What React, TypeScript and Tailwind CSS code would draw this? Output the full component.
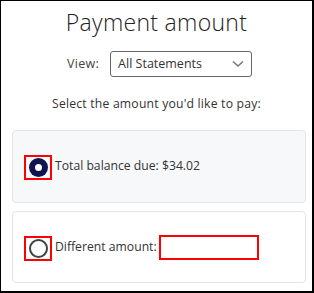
import React from "react";

export default function App() {
  const font = { fontFamily: '"Open Sans", "Liberation Sans", sans-serif' };
  return (
    <div
      className="w-[314px] h-[293px] box-border border-l border-t border-r-2 border-b-2 border-black bg-white text-[#333]"
      style={font}
    >
      <div className="flex flex-col items-center pt-[5px]">
        <h1 className="text-[23px] leading-[32px] font-light text-[#222] tracking-[0.3px]">Payment amount</h1>
      </div>
      <div className="flex items-center mt-[13px] ml-[66px] h-[26px]">
        <span className="text-[12.5px] text-[#444] tracking-[0.3px]">View:</span>
        <div className="ml-[11px] w-[142px] h-[26px] box-border border border-[#666] rounded-[3px] flex items-center justify-between pl-[7px] pr-[7px]">
          <span className="text-[12.5px] text-[#333]">All Statements</span>
          <svg width="12" height="8" viewBox="0 0 12 8">
            <path d="M1 1.5 L6 6 L11 1.5" fill="none" stroke="#777" strokeWidth="1.6" />
          </svg>
        </div>
      </div>
      <div className="flex justify-center mt-[18px]">
        <span className="text-[12.2px] leading-[18px] text-[#333] tracking-[0.2px]">Select the amount you'd like to pay:</span>
      </div>
      <div className="ml-[11px] mt-[17px] w-[294px] h-[73px] box-border border border-[#e3e5e8] rounded-[4px] bg-[#f7f8fa] flex items-center pl-[11px]">
        <div className="w-[28px] h-[25px] box-border border-2 border-[#ff0000] flex items-center justify-center mt-[2px]">
          <div className="w-[19px] h-[19px] rounded-full bg-[#0e1452] flex items-center justify-center">
            <div className="w-[7px] h-[7px] rounded-full bg-white" />
          </div>
        </div>
        <span className="ml-[3px] text-[12.2px] text-[#333]">Total balance due: $34.02</span>
      </div>
      <div className="ml-[11px] mt-[8px] w-[294px] h-[72px] box-border border border-[#e3e5e8] rounded-[4px] bg-white flex items-center pl-[11px]">
        <div className="w-[28px] h-[25px] box-border border-2 border-[#ff0000] flex items-center justify-center mt-[2px]">
          <div className="w-[19px] h-[19px] box-border rounded-full border-[2.5px] border-[#3e4545]" />
        </div>
        <span className="ml-[3px] text-[12.2px] text-[#333]">Different amount:</span>
        <div className="ml-[2px] w-[100px] h-[25px] box-border border-2 border-[#ff0000] bg-white mt-[1px]" />
      </div>
    </div>
  );
}
